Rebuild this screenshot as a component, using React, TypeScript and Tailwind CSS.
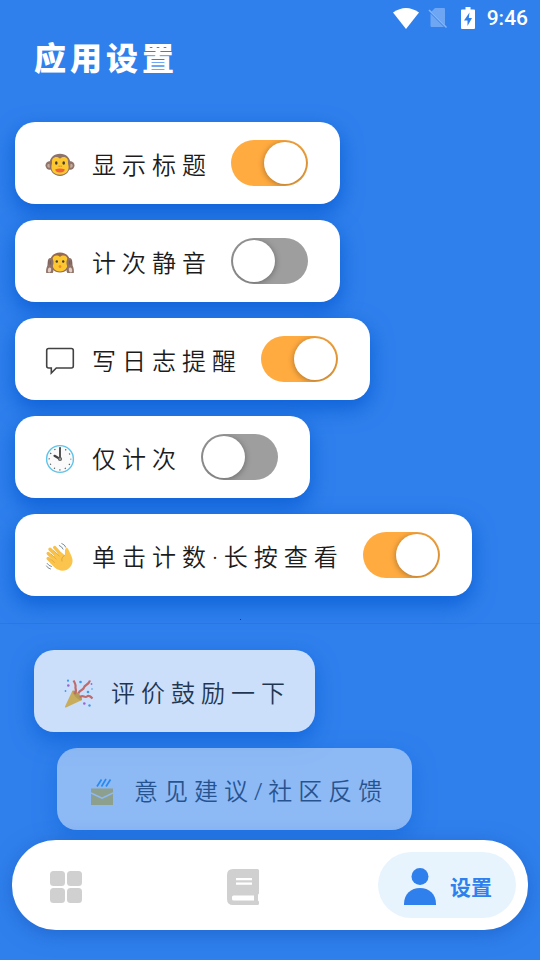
import { useState, type ReactNode } from "react";

function MonkeyIcon() {
  return (
    <svg viewBox="0 0 30 30" className="size-[30px] shrink-0" aria-hidden="true">
      <circle cx="4.700" cy="15.500" r="4.200" fill="#8f7268" />
      <circle cx="25.300" cy="15.500" r="4.200" fill="#8f7268" />
      <circle cx="4.200" cy="15.700" r="2" fill="#c4ad9c" />
      <circle cx="25.800" cy="15.700" r="2" fill="#c4ad9c" />
      <path d="M15 3.700c6 0 10.500 4 10.500 10.300c0 7-4.500 12-10.500 12s-10.500-5-10.500-12c0-6.300 4.500-10.300 10.500-10.300z" fill="#8f7268" />
      <path d="M15 8.700c1-1.200 2.200-1.700 3.700-1.700c3 0 4.600 2.300 4.300 5.500c-.1 1.500.6 2.800.6 4.700c0 4.600-3.800 7.500-8.600 7.500s-8.600-2.900-8.600-7.500c0-1.900.7-3.200.6-4.700c-.3-3.200 1.300-5.500 4.300-5.500c1.500 0 2.700.5 3.700 1.700z" fill="#fdc82f" />
      <ellipse cx="11.300" cy="13" rx="1.300" ry="1.800" fill="#403b38" />
      <ellipse cx="18.700" cy="13" rx="1.300" ry="1.800" fill="#403b38" />
      <path d="M13.700 16.200h.8M15.700 16.200h.8" stroke="#9b6b20" strokeWidth="1" />
      <path d="M10.300 19.200c3-1 6.400-1 9.400 0c0 2.300-1.900 3.300-4.700 3.300s-4.700-1-4.700-3.300z" fill="#f0603c" />
    </svg>
  );
}

function HearNoMonkeyIcon() {
  return (
    <svg viewBox="0 0 30 30" className="size-[30px] shrink-0" aria-hidden="true">
      <path d="M15 4.500c6 0 10 4 10 9.500c0 6-4 10.500-10 10.500s-10-4.500-10-10.500c0-5.500 4-9.500 10-9.500z" fill="#97694f" />
      <path d="M15 9c1-1 2.200-1.400 3.500-1.400c2.500 0 4 1.800 4 4.400v4.500c0 4-3.200 7-7.500 7s-7.500-3-7.500-7v-4.500c0-2.600 1.500-4.400 4-4.400c1.300 0 2.500.4 3.500 1.400z" fill="#fdc82f" />
      <path d="M6.500 10c-2.500-.5-3.800 1.200-3.800 4l-.3 3.500c-1 2-1.600 5-1.200 7.500h6.500c1.200-2 1-4.500-.2-6.500c1.500-2.500 1.500-7-1-8.500z" fill="#8f7268" />
      <path d="M23.500 10c2.500-.5 3.800 1.200 3.800 4l.3 3.500c1 2 1.600 5 1.200 7.500h-6.500c-1.200-2-1-4.500.2-6.500c-1.500-2.500-1.500-7 1-8.500z" fill="#8f7268" />
      <ellipse cx="4.500" cy="22" rx="1.700" ry="2.500" fill="#e3cfc5" transform="rotate(15 4.500 22)" />
      <ellipse cx="25.500" cy="22" rx="1.700" ry="2.500" fill="#e3cfc5" transform="rotate(-15 25.500 22)" />
      <path d="M3.800 12.500v4M5.600 12.500v4M24.400 12.500v4M26.200 12.500v4" stroke="#6d5750" strokeWidth=".7" />
      <circle cx="11.800" cy="13.500" r="1.200" fill="#403b38" />
      <circle cx="18.200" cy="13.500" r="1.200" fill="#403b38" />
      <ellipse cx="15" cy="18.500" rx="1.400" ry="1.600" fill="#f08a2c" />
    </svg>
  );
}

function MessageIcon() {
  return (
    <svg viewBox="0 0 30 30" className="size-[30px] shrink-0" aria-hidden="true">
      <path
        d="M3.700 2.500h22.600q2 0 2 2v15.500q0 2-2 2h-15l-5 5v-5h-2.600q-2 0-2-2v-15.500q0-2 2-2z"
        fill="none"
        stroke="#424242"
        strokeWidth="1.600"
      />
    </svg>
  );
}

function ClockIcon() {
  return (
    <svg viewBox="0 0 30 30" className="size-[30px] shrink-0" aria-hidden="true">
      <circle cx="15" cy="15" r="13.400" fill="#fafafa" stroke="#5fc3ea" strokeWidth="1.400" />
      <circle cx="15" cy="15" r="10.800" fill="none" stroke="#555555" strokeWidth="1.200" strokeDasharray="1.200 4.455" strokeDashoffset=".6" />
      <path d="M15 15V4" stroke="#424242" strokeWidth="1.800" strokeLinecap="round" />
      <path d="M15 15l-5.500-3.200" stroke="#424242" strokeWidth="2.200" strokeLinecap="round" />
      <circle cx="15" cy="15" r="2.100" fill="#616161" />
      <circle cx="15" cy="15" r=".7" fill="#e0e0e0" />
    </svg>
  );
}

function WaveIcon() {
  return (
    <svg viewBox="0 0 30 30" className="size-[30px] shrink-0" aria-hidden="true">
      <g stroke="#f6c04a" strokeLinecap="round" strokeWidth="3.400">
        <path d="M3.200 16.500l8 7.500M3.200 11.500l9.300 8.500M5 7.200l9.500 9.300M9.700 5.500l7 8" />
      </g>
      <path d="M10 12l6.500-1.500l3.300 2.800c.5-2-.2-4.500.5-6.300c.5-1.300 2.300-1.400 2.900-.1c1 2.600 3.600 6.600 4.200 10.100c.9 5-2.200 9.300-6 11c-3.700 1.400-8.100.8-11.600-2.400l-5-4.800z" fill="#fbc54d" />
      <path d="M6.200 12.200l5 4.800M8.800 8.600l5.400 5.500M5.600 17l4 3.700" stroke="#e2a63a" strokeWidth=".8" strokeLinecap="round" />
      <path d="M19.700 13.300c-2.600 1.500-3.500 3.700-2.600 6.200" fill="none" stroke="#dca137" strokeWidth=".9" />
      <path d="M14.300 3.500q2.800 1 3.800 3.600M16.800 1.500q3 1 4 3.700M1.500 24q1 2.300 4 3M2.200 21.500q1.500 2.500 4.300 3" fill="none" stroke="#6d8290" strokeWidth=".9" strokeLinecap="round" />
    </svg>
  );
}

function PartyIcon() {
  return (
    <svg viewBox="0 0 30 30" className="size-[30px] shrink-0" aria-hidden="true">
      <path d="M8.500 12.500c3 1.500 7.300 5.500 9.500 9.500l-16 7.500c-.8.300-1.200-.2-1-1z" fill="#fcbd2c" />
      <ellipse cx="13.300" cy="17.300" rx="2.300" ry="6.400" transform="rotate(-44 13.300 17.300)" fill="#e0a628" />
      <g fill="none" stroke="#f1633f" strokeWidth="2.200">
        <path d="M10.500 16c3-3 .5-5 1-7s-.5-4-2-6.500" />
        <path d="M14.500 15.500c1-4 5-3 5.500-6s4.500-2 6-7" />
        <path d="M16 19.500c2-3.500 5 1 7-1s4.500 1 5.500 2" />
      </g>
      <g fill="#42a5e8">
        <circle cx="4" cy="2.700" r="1.100" />
        <circle cx="16.500" cy="4" r="1.300" />
        <circle cx="1.500" cy="13" r=".9" />
        <circle cx="24" cy="14" r="1.300" />
        <circle cx="25.500" cy="27.500" r="1.200" />
        <circle cx="28" cy="11" r=".8" />
      </g>
      <g fill="#c05bd0">
        <circle cx="4.300" cy="7.500" r="1.300" />
        <circle cx="20.300" cy="25.500" r="1.300" />
        <circle cx="27.500" cy="6" r=".9" />
      </g>
    </svg>
  );
}

function MailIcon() {
  return (
    <svg viewBox="0 0 30 30" className="size-[30px] shrink-0" aria-hidden="true">
      <path d="M10 10.500l4.500-7M14.500 10.500l4.500-7.500M19 10.500l4.500-7" stroke="#2196f3" strokeWidth="1.700" />
      <path d="M4 12.500h22v16.500h-22z" fill="#ffc61a" />
      <path d="M4 17l11 5.200l11-5.200" fill="none" stroke="#ffffff" strokeWidth="1.400" />
    </svg>
  );
}

type Setting = {
  label: string;
  icon: ReactNode;
  on: boolean;
};

const settings: Setting[] = [
  { label: "显示标题", icon: <MonkeyIcon />, on: true },
  { label: "计次静音", icon: <HearNoMonkeyIcon />, on: false },
  { label: "写日志提醒", icon: <MessageIcon />, on: true },
  { label: "仅计次", icon: <ClockIcon />, on: false },
  { label: "单击计数·长按查看", icon: <WaveIcon />, on: true },
];

const cardClass =
  "flex h-[82px] w-fit items-center rounded-[20px] bg-white pl-[30px] shadow-[0_8px_20px_2px_rgba(0,85,205,0.65)]";

function CardLabel({ icon, label }: { icon: ReactNode; label: string }) {
  return (
    <span className="flex items-center gap-[17px] pt-1 text-2xl font-[350] tracking-[6px] whitespace-nowrap text-[#1c1c1c]">
      {icon}
      {label}
    </span>
  );
}

function SettingCard({ label, icon, on }: Setting) {
  const [checked, setChecked] = useState(on);

  return (
    <label className={`${cardClass} cursor-pointer pr-8`}>
      <CardLabel icon={icon} label={label} />
      <input
        type="checkbox"
        role="switch"
        checked={checked}
        onChange={(e) => setChecked(e.target.checked)}
        className="ml-[19px] flex h-[46px] w-[77px] shrink-0 cursor-pointer appearance-none items-center overflow-hidden rounded-full bg-[#9e9e9e] px-0.5 before:block before:size-[42px] before:rounded-full before:bg-white before:shadow-[0_1px_6px_rgba(0,0,0,0.35)] before:content-[''] checked:bg-[#ffab40] checked:before:ml-auto"
      />
    </label>
  );
}

function StatusBar() {
  return (
    <div className="flex h-9 items-center justify-end gap-[9px] pr-3 text-white">
      <svg viewBox="0 0 26 21" className="h-[21px] w-[26px]" aria-hidden="true">
        <path d="M0 4.500Q13-4.500 26 4.500L13 21z" fill="currentColor" />
      </svg>
      <svg viewBox="0 0 20 20" className="size-5" aria-hidden="true">
        <path d="M7 0h9q1 0 1 1v16L3.500 3.500zM2.500 5.500L16 19H3.500q-1 0-1-1z" fill="#6ea6f3" />
        <path d="M1 2l17.500 17.500" stroke="#8ab6f5" strokeWidth="1.400" />
      </svg>
      <svg viewBox="0 0 14 22" className="mr-[3px] ml-1 h-[22px] w-3.5" aria-hidden="true">
        <path d="M4.500 0h5v2.500h3.500q1 0 1 1V21q0 1-1 1H1q-1 0-1-1V3.500q0-1 1-1h3.500z" fill="currentColor" />
        <path d="M8.500 5.500L3 13.500h3.500V19L11 11H7.800z" fill="#2f80ed" />
      </svg>
      <span className="font-['Roboto'] text-[21px] leading-6 font-medium">9:46</span>
    </div>
  );
}

function BottomNav() {
  return (
    <nav className="relative mx-3 mt-auto mb-[30px] flex items-center justify-between rounded-[44px] bg-white p-3 shadow-[0_4px_20px_rgba(20,80,180,0.5)]">
      <button type="button" aria-label="主页" className="flex h-[66px] items-center px-[26px] pt-[3px] text-[#d0d0d0]">
        <svg viewBox="0 0 32 32" className="size-8" fill="currentColor" aria-hidden="true">
          <rect x="0" y="0" width="15" height="15" rx="3.500" />
          <rect x="17" y="0" width="15" height="15" rx="3.500" />
          <rect x="0" y="17" width="15" height="15" rx="3.500" />
          <rect x="17" y="17" width="15" height="15" rx="3.500" />
        </svg>
      </button>
      <button type="button" aria-label="日志" className="flex h-[66px] items-center px-[26px] pt-[3px] text-[#d0d0d0]">
        <svg viewBox="0 0 32 36" className="h-9 w-8" aria-hidden="true">
          <path
            d="M6 0h24.500q1.500 0 1.500 1.500V24q0 1-1 1.500v6q1 .5 1 1.500v1.500q0 1.500-1.500 1.500H6q-6 0-6-6V6q0-6 6-6z"
            fill="currentColor"
          />
          <path d="M9 9h16v2.200H9zM9 13.500h16v2.200H9zM6.500 26.500H27v5H6.500q-1.500 0-1.500-1.500v-2q0-1.500 1.500-1.500z" fill="#fff" />
        </svg>
      </button>
      <button
        type="button"
        aria-current="page"
        className="flex h-[66px] items-center gap-3.5 rounded-full bg-[#e8f4fd] pt-[3px] pr-6 pl-[26px] text-[#2f80ed]"
      >
        <svg viewBox="0 0 32 37" className="h-[37px] w-8" fill="currentColor" aria-hidden="true">
          <circle cx="16" cy="8.500" r="8.500" />
          <path d="M0 37v-1C0 26 7 20 16 20s16 6 16 16v1z" />
        </svg>
        <span className="text-[21px] leading-6 font-bold">设置</span>
      </button>
    </nav>
  );
}

export default function App() {
  return (
    <div className="flex min-h-screen flex-col bg-[#2f80ed] font-['Noto_Sans','Noto_Sans_CJK_SC',sans-serif]">
      <StatusBar />
      <h1 className="pt-0.5 pl-[34px] text-[32px] leading-10 font-black tracking-[4px] text-white">应用设置</h1>

      <main>
        <section className="mt-11 flex flex-col gap-4 pl-[15px]">
          {settings.map((item) => (
            <SettingCard key={item.label} {...item} />
          ))}
        </section>

        <div className="mt-[23px] ml-60 size-px bg-black/60" />
        <hr className="mt-[3px] border-[#2b78e2]" />

        <section className="mt-[26px] flex flex-col gap-4">
          <button type="button" className={`${cardClass} ml-[34px] pr-6 opacity-75`}>
            <CardLabel icon={<PartyIcon />} label="评价鼓励一下" />
          </button>
          <button type="button" className={`${cardClass} ml-[57px] pr-6 opacity-45`}>
            <CardLabel icon={<MailIcon />} label="意见建议/社区反馈" />
          </button>
        </section>
      </main>

      <BottomNav />
    </div>
  );
}
